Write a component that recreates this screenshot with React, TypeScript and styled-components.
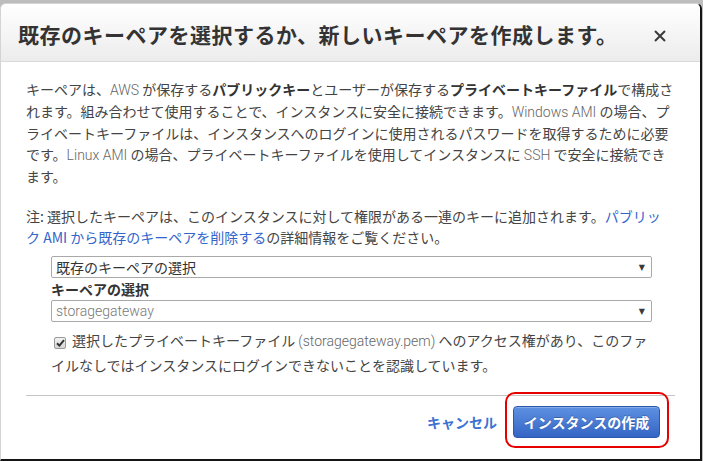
import React from "react";
import styled, { createGlobalStyle } from "styled-components";

const GlobalStyle = createGlobalStyle`
    html, body {
        margin: 0;
        padding: 0;
        background: #bdbdbd;
    }
    body {
        font-family: "Noto Sans CJK JP", "Liberation Sans", sans-serif;
        color: #444;
    }
`;

const Modal = styled.div`
    box-sizing: border-box;
    width: 702px;
    height: 458px;
    margin-top: 3px;
    background: #fff;
    border-left: 1px solid #d4d4d4;
    border-top: 1px solid #d4d4d4;
    border-right: 2px solid #151515;
    border-bottom: 2px solid #151515;
    border-radius: 6px 6px 0 0;
    display: flex;
    flex-direction: column;
    overflow: hidden;
`;

const Header = styled.header`
    box-sizing: border-box;
    height: 58px;
    padding: 0 29px 0 17px;
    display: flex;
    align-items: center;
    justify-content: space-between;
    background: linear-gradient(#ffffff, #ececec);
    border-bottom: 1px solid #d9d9d9;
`;

const Title = styled.h2`
    margin: 2px 0 0 0;
    font-size: 21px;
    font-weight: 700;
    color: #333;
    letter-spacing: 0.5px;
`;

const CloseButton = styled.button`
    border: 0;
    background: none;
    padding: 4px;
    margin-top: 6px;
    display: flex;
    cursor: pointer;
`;

const Body = styled.div`
    padding: 17px 25px 0 25px;
`;

const Paragraph = styled.p<{ $gap?: number }>`
    margin: 0 0 ${({ $gap }) => $gap ?? 19}px 0;
    font-size: 14px;
    line-height: 21px;
    white-space: nowrap;
    color: #444;
`;

const Latin = styled.span`
    font-family: Roboto, "Liberation Sans", sans-serif;
    font-weight: 300;
    color: #666;
`;

const Strong = styled.strong`
    font-weight: 700;
    color: #333;
`;

const Link = styled.a`
    color: #3366cc;
    text-decoration: none;
    cursor: pointer;
`;

const Form = styled.div`
    padding-left: 25px;
    width: 601px;
`;

const Select = styled.div<{ $muted?: boolean }>`
    box-sizing: border-box;
    height: 22px;
    border: 1px solid #a9a9a9;
    border-radius: 2px;
    padding: 0 6px 0 4px;
    display: flex;
    align-items: center;
    justify-content: space-between;
    font-size: 14px;
    color: ${({ $muted }) => ($muted ? "#777" : "#333")};
    font-family: ${({ $muted }) =>
        $muted ? `Roboto, "Liberation Sans", sans-serif` : `"Noto Sans CJK JP", sans-serif`};
    font-weight: ${({ $muted }) => ($muted ? 300 : 400)};
`;

const Arrow = styled.span`
    font-size: 8px;
    font-weight: 400;
    color: #3a3a3a;
    font-family: "DejaVu Sans", sans-serif;
`;

const FieldLabel = styled.div`
    font-size: 14px;
    line-height: 22px;
    font-weight: 700;
    color: #333;
`;

const CheckRow = styled.label`
    display: block;
    margin-top: 6px;
    font-size: 14px;
    line-height: 24px;
    white-space: nowrap;
    color: #444;
`;

const Indent = styled.span`
    padding-left: 25px;
`;

const Box = styled.span`
    display: inline-flex;
    align-items: center;
    justify-content: center;
    box-sizing: border-box;
    width: 12px;
    height: 12px;
    margin: 0 6px 0 3px;
    vertical-align: -1px;
    border: 1px solid #9a9a9a;
    border-radius: 2px;
    background: linear-gradient(#f2f2f2, #d6d6d6);
`;

const Footer = styled.footer`
    margin: 18px 25px 0 25px;
    border-top: 1px solid #c6c6c6;
    padding: 10px 15px 0 0;
    display: flex;
    align-items: center;
    justify-content: flex-end;
    gap: 16px;
`;

const CancelLink = styled.a`
    font-size: 14px;
    font-weight: 700;
    color: #3d72d4;
    cursor: pointer;
`;

const Highlight = styled.div`
    position: relative;

    &::after {
        content: "";
        position: absolute;
        top: -14px;
        bottom: -10px;
        left: -8px;
        right: -9px;
        border: 2.5px solid #e60000;
        border-radius: 10px;
        pointer-events: none;
    }
`;

const PrimaryButton = styled.button`
    box-sizing: border-box;
    width: 147px;
    height: 32px;
    border: 1px solid #2b58ad;
    border-radius: 4px;
    background: linear-gradient(#5e91e2, #3465c4);
    color: #fff;
    font-family: "Noto Sans CJK JP", sans-serif;
    font-size: 14px;
    font-weight: 700;
    text-shadow: 0 -1px 0 rgba(0, 0, 0, 0.25);
    box-shadow: inset 0 1px 0 rgba(255, 255, 255, 0.25);
    cursor: pointer;
`;

const CloseIcon = () => (
    <svg width="14" height="14" viewBox="0 0 14 14">
        <path d="M2 2 L12 12 M12 2 L2 12" stroke="#3a3a3a" strokeWidth="2" />
    </svg>
);

const CheckIcon = () => (
    <svg width="9" height="8" viewBox="0 0 9 8">
        <path d="M1 4.2 L3.4 6.6 L8 1.2" fill="none" stroke="#333" strokeWidth="2" />
    </svg>
);

export default function App() {
    return (
        <>
            <GlobalStyle />
            <Modal>
                <Header>
                    <Title>既存のキーペアを選択するか、新しいキーペアを作成します。</Title>
                    <CloseButton aria-label="閉じる">
                        <CloseIcon />
                    </CloseButton>
                </Header>
                <Body>
                    <Paragraph>
                        キーペアは、<Latin>AWS</Latin> が保存する<Strong>パブリックキー</Strong>とユーザーが保存する
                        <Strong>プライベートキーファイル</Strong>で構成さ
                        <br />
                        れます。組み合わせて使用することで、インスタンスに安全に接続できます。
                        <Latin>Windows AMI</Latin> の場合、プ
                        <br />
                        ライベートキーファイルは、インスタンスへのログインに使用されるパスワードを取得するために必要
                        <br />
                        です。<Latin>Linux AMI</Latin> の場合、プライベートキーファイルを使用してインスタンスに{" "}
                        <Latin>SSH</Latin> で安全に接続でき
                        <br />
                        ます。
                    </Paragraph>
                    <Paragraph $gap={8}>
                        注: 選択したキーペアは、このインスタンスに対して権限がある一連のキーに追加されます。
                        <Link>パブリッ</Link>
                        <br />
                        <Link>ク AMI から既存のキーペアを削除する</Link>の詳細情報をご覧ください。
                    </Paragraph>
                    <Form>
                        <Select>
                            <span>既存のキーペアの選択</span>
                            <Arrow>▼</Arrow>
                        </Select>
                        <FieldLabel>キーペアの選択</FieldLabel>
                        <Select $muted>
                            <span>storagegateway</span>
                            <Arrow>▼</Arrow>
                        </Select>
                    </Form>
                    <CheckRow>
                        <Indent />
                        <Box>
                            <CheckIcon />
                        </Box>
                        選択したプライベートキーファイル <Latin>(storagegateway.pem)</Latin>{" "}
                        へのアクセス権があり、このファ
                        <br />
                        <Indent />
                        イルなしではインスタンスにログインできないことを認識しています。
                    </CheckRow>
                </Body>
                <Footer>
                    <CancelLink>キャンセル</CancelLink>
                    <Highlight>
                        <PrimaryButton>インスタンスの作成</PrimaryButton>
                    </Highlight>
                </Footer>
            </Modal>
        </>
    );
}
